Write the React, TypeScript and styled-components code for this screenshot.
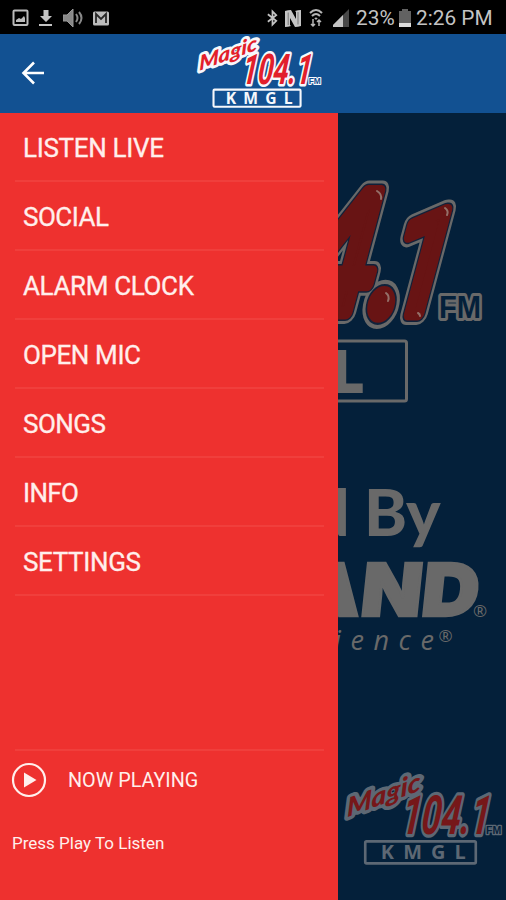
import React from "react";
import styled, { createGlobalStyle } from "styled-components";

const GlobalStyle = createGlobalStyle`
  * { box-sizing: border-box; }
  body { margin: 0; background: #04203a; font-family: Roboto, "Liberation Sans", sans-serif; }
`;

const Screen = styled.div`
  width: 506px;
  height: 900px;
  display: flex;
  flex-direction: column;
  overflow: hidden;
`;

const StatusBar = styled.div`
  height: 34px;
  flex: none;
  background: #000;
  color: #c4c4c4;
  display: flex;
  align-items: center;
  justify-content: space-between;
  padding: 2px 12px 0 12px;
`;

const StatusGroup = styled.div<{ $gap: number }>`
  display: flex;
  align-items: center;
  gap: ${(p) => p.$gap}px;
  svg { display: block; }
`;

const StatusText = styled.span<{ $width: number }>`
  font-size: 20.8px;
  line-height: 32px;
  width: ${(p) => p.$width}px;
  white-space: nowrap;
`;

const Header = styled.header`
  height: 79px;
  flex: none;
  background: #125192;
  display: grid;
  grid-template-columns: 196px 126px 1fr;
`;

const BackButton = styled.button`
  border: 0;
  padding: 0 0 2px 21px;
  background: none;
  display: flex;
  align-items: center;
`;

const LogoSlot = styled.div`
  padding-top: 3px;
`;

const Body = styled.div`
  flex: 1;
  display: flex;
`;

const Drawer = styled.nav`
  width: 338px;
  flex: none;
  background: #ee312f;
  color: #ffefec;
  display: flex;
  flex-direction: column;
  padding: 0 14px 0 15px;
`;

const MenuItem = styled.a`
  height: 69px;
  flex: none;
  border-bottom: 2px solid #f03f3c;
  padding-left: 8px;
  svg { display: block; overflow: visible; }
`;

const Player = styled.div`
  margin-top: auto;
  height: 151px;
  border-top: 2px solid #f03f3c;
`;

const PlayRow = styled.div`
  display: flex;
  align-items: center;
  height: 35px;
  margin: 11px 0 0 -4px;
  gap: 21px;
  font-size: 19.8px;
`;

const PlayLabel = styled.span`
  padding-top: 2px;
`;

const Hint = styled.p`
  margin: 33px 0 0 -3px;
  font-size: 17px;
  line-height: 26px;
`;

const Backdrop = styled.main`
  flex: 1;
  min-width: 0;
  background: #04203a;
  overflow: hidden;
  display: flex;
  flex-direction: column;
  color: #696969;
  svg { display: block; flex: none; }
`;

const Presented = styled.div`
  height: 74px;
  margin: 36px 66px 0 -60px;
  text-align: right;
  font: 900 65px/65px Lato, sans-serif;
  letter-spacing: -0.5px;
  white-space: nowrap;
`;

const Tagline = styled.div`
  display: flex;
  height: 34px;
  margin-left: -4px;
  font: italic 400 27px/34px "Open Sans", sans-serif;
  letter-spacing: 9.6px;
  white-space: nowrap;
`;

const Registered = styled.span`
  font: 400 17px/26px "Open Sans", sans-serif;
  letter-spacing: 0;
  margin-left: -5px;
`;

const CornerLogo = styled.div`
  margin: 117px 0 0 5px;
`;

interface LogoColors { red: string; edge: string; ink: string; }

function StationLogo({ width, height, red, edge, ink }: LogoColors & { width: number; height: number }) {
  return (
    <svg width={width} height={height} viewBox="54 62 482 274" preserveAspectRatio="none" overflow="visible" style={{ display: "block" }}>
      <g fill={red} stroke={edge} strokeWidth="20" strokeLinejoin="round" paintOrder="stroke" fontStyle="italic">
        <text transform="translate(66 192) rotate(-20) skewX(-20)" fontFamily="Lato, sans-serif" fontWeight="900" fontSize="74" textLength="236" lengthAdjust="spacingAndGlyphs">Magic</text>
        <text transform="translate(228 244) skewX(-6)" fontFamily="Roboto, sans-serif" fontWeight="700" fontSize="163" textLength="266" lengthAdjust="spacingAndGlyphs">104.1</text>
      </g>
      <text x="485" y="243" fill={ink} stroke={edge} strokeWidth="8" paintOrder="stroke" strokeLinejoin="round" fontFamily="Liberation Sans, sans-serif" fontWeight="700" fontSize="32" textLength="46" lengthAdjust="spacingAndGlyphs">FM</text>
      <rect x="121" y="265" width="333" height="66" rx="4" fill={ink} stroke={edge} strokeWidth="8" />
      <text x="168" y="319" fill={edge} fontFamily="Open Sans, sans-serif" fontWeight="700" fontSize="60" textLength="256" lengthAdjust="spacing">KMGL</text>
    </svg>
  );
}

function FeatureArt() {
  return (
    <svg width="168" height="330" viewBox="338 113 168 330">
      <defs>
        <g id="frequency" fontFamily="Roboto, sans-serif" fontWeight="400" strokeLinejoin="round">
          <text transform="translate(287 313) skewX(-15) scale(.8 1)" fontSize="171">4</text>
          <text transform="translate(367 313) skewX(-10) scale(1 1.4)" fontSize="90" fontWeight="700">.</text>
          <text transform="translate(379 314) skewX(-15) scale(.78 1)" fontSize="145">1</text>
        </g>
      </defs>
      <use href="#frequency" fill="#696969" stroke="#696969" strokeWidth="22" />
      <use href="#frequency" fill="#10213a" stroke="#10213a" strokeWidth="16" />
      <use href="#frequency" fill="#681414" stroke="#681414" strokeWidth="13" />
      <g fill="none" stroke="#947069" strokeWidth="2" strokeLinecap="round">
        <path d="M377 191q5 3 4 8" />
        <path d="M445 208q4 3 2 7" />
        <path d="M386 293q4 3 2 8" />
        <path d="M418 313q2 1 2 3" />
      </g>
      <text x="439" y="318" fill="#04203a" stroke="#696969" strokeWidth="6" paintOrder="stroke" strokeLinejoin="round" fontFamily="Liberation Sans, sans-serif" fontWeight="700" fontSize="31" textLength="42" lengthAdjust="spacingAndGlyphs">FM</text>
      <rect x="200" y="341" width="206.5" height="60" rx="2" fill="none" stroke="#696969" strokeWidth="3" />
      <text x="330" y="392.5" fill="#696969" fontFamily="Open Sans, sans-serif" fontWeight="800" fontSize="60">L</text>
    </svg>
  );
}

const menu: { label: string; width: number }[] = [
  { label: "LISTEN LIVE", width: 141 },
  { label: "SOCIAL", width: 86 },
  { label: "ALARM CLOCK", width: 171 },
  { label: "OPEN MIC", width: 118 },
  { label: "SONGS", width: 83 },
  { label: "INFO", width: 56 },
  { label: "SETTINGS", width: 118 },
];

export default function App() {
  return (
    <Screen>
      <GlobalStyle />
      <StatusBar>
        <StatusGroup $gap={9}>
          <svg width="17" height="18" viewBox="0 0 17 18" fill="none" stroke="#bbb" strokeWidth="2">
            <rect x="1.5" y="1.5" width="14" height="14.5" rx="1" />
            <path d="M4 13V11l3-2 2 1 3-3 1 2v4z" fill="#bbb" stroke="none" />
          </svg>
          <svg width="16" height="18" viewBox="0 0 16 18" fill="#c4c4c4">
            <path d="M5.500 1h5v6H14l-6 6-6-6h3.500zM1 15h13v2H1z" />
          </svg>
          <svg width="20" height="20" viewBox="0 0 20 20">
            <path d="M0 7h4l6-6v18l-6-6H0z" fill="#888" stroke="#999" strokeWidth="1" />
            <path d="M13 6q3 4 0 8M16 4q5 6 0 12" fill="none" stroke="#888" strokeWidth="2" />
          </svg>
          <svg width="18" height="17" viewBox="0 0 18 17">
            <rect x="1" y="1.5" width="16" height="14" rx="1.5" fill="#bcbcbc" />
            <path d="M4 13V4l5 5 5-5v9" fill="none" stroke="#272727" strokeWidth="1.8" />
          </svg>
        </StatusGroup>
        <StatusGroup $gap={5}>
          <svg width="13" height="18" viewBox="0 0 14 18" fill="none" stroke="#c4c4c4" strokeWidth="1.9">
            <path d="M2 5l9 7-4 4V2l4 4-9 7" />
          </svg>
          <svg width="18" height="19" viewBox="0 0 18 19">
            <path d="M1 2q3-1 6-1l5 9V3l-1-1q3-1 6-1v16q-3 1-6 1L6 9v7l1 1q-3 1-6 1z" fill="#c4c4c4" />
            <path d="M4.200 3.500V16M14 3v12.500" stroke="#777" strokeWidth="1" />
          </svg>
          <svg width="21" height="20" viewBox="0 0 21 20" fill="none" stroke="#b6b6b6" strokeWidth="2">
            <path d="M3 5q6-6 12 0M5 8q4-4 8 0M8 11q1-1 2 0" />
            <path d="M6 11v7m-2-2l2 2 2-2M12 18v-6m-2 2l2-2 2 2" strokeWidth="1.5" />
          </svg>
          <svg width="18" height="18" viewBox="0 0 18 18">
            <path d="M16 0v18H-2z" fill="#484848" /><path d="M10 6v12H-2z" fill="#c4c4c4" />
          </svg>
          <StatusText $width={38}>23%</StatusText>
          <svg width="12" height="18" viewBox="0 0 12 18">
            <path d="M3 0h6v2h3v16H0V2h3z" fill="#626262" /><path d="M0 14h12v4H0z" fill="#ddd" />
          </svg>
          <StatusText $width={78}>2:26 PM</StatusText>
        </StatusGroup>
      </StatusBar>
      <Header>
        <BackButton aria-label="Back">
          <svg width="24" height="24" viewBox="0 0 24 24" fill="none" stroke="#fff" strokeWidth="2.6">
            <path d="M13 1.500L2.500 12 13 22.500M2.500 12H23" />
          </svg>
        </BackButton>
        <LogoSlot>
          <StationLogo width={126} height={71} red="#e21f2b" edge="#f6f8fc" ink="#125192" />
        </LogoSlot>
      </Header>
      <Body>
        <Drawer>
          {menu.map((item) => (
            <MenuItem key={item.label}>
              <svg width={item.width} height="67">
                <text x="0" y="43.500" fill="#ffefec" stroke="#ffefec" strokeWidth=".3" fontSize="26" textLength={item.width}>{item.label}</text>
              </svg>
            </MenuItem>
          ))}
          <Player>
            <PlayRow>
              <svg width="36" height="36" viewBox="0 0 36 36">
                <circle cx="18" cy="18" r="16" fill="none" stroke="#ffefec" strokeWidth="2.2" />
                <path d="M13 10.500L25.500 18 13 25.500z" fill="#ffefec" />
              </svg>
              <PlayLabel>NOW PLAYING</PlayLabel>
            </PlayRow>
            <Hint>Press Play To Listen</Hint>
          </Player>
        </Drawer>
        <Backdrop>
          <FeatureArt />
          <Presented>d By</Presented>
          <svg width="168" height="70" viewBox="338 553 168 70" fill="#696969">
            <text transform="translate(296 616) skewX(-6)" fontFamily="Inter, sans-serif" fontWeight="900" fontSize="73" stroke="#696969" strokeWidth="2.500" textLength="181" lengthAdjust="spacingAndGlyphs">AND</text>
            <text x="473" y="617" fontFamily="Open Sans, sans-serif" fontSize="17">®</text>
          </svg>
          <Tagline>ience<Registered>®</Registered></Tagline>
          <CornerLogo>
            <StationLogo width={160} height={91} red="#761719" edge="#5d6874" ink="#04203a" />
          </CornerLogo>
        </Backdrop>
      </Body>
    </Screen>
  );
}
